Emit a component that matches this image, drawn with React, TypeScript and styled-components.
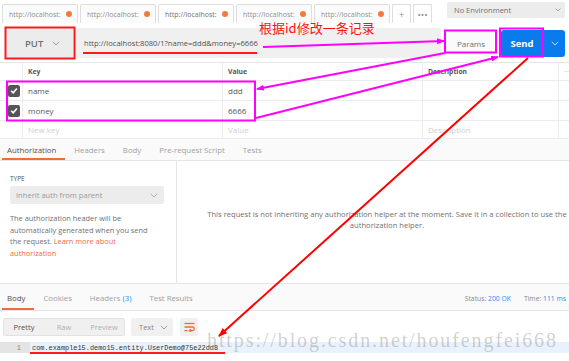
import styled, { createGlobalStyle } from "styled-components";

const GlobalStyle = createGlobalStyle`
  html, body { margin: 0; padding: 0; background: #fff; }
  body { font-family: "Open Sans", "Liberation Sans", sans-serif; overflow: hidden; }
  * { box-sizing: border-box; }
`;

const Page = styled.div`
  position: relative;
  width: 569px;
  height: 361px;
  overflow: hidden;
  background: #fff;
  color: #505050;
`;

/* ---------- top tabs ---------- */
const TabBar = styled.div`
  display: flex;
  align-items: flex-end;
  height: 23px;
  padding: 0 4px 0 2px;
  gap: 2px;
`;
const Tab = styled.div<{ $active?: boolean }>`
  width: 76px;
  height: 19px;
  display: flex;
  align-items: center;
  justify-content: space-between;
  padding: 0 5px 0 6px;
  border: 1px solid #dedede;
  border-bottom: none;
  border-radius: 2px 2px 0 0;
  background: ${p => (p.$active ? "#fff" : "#fbfbfb")};
  font-size: 7px;
  color: ${p => (p.$active ? "#707070" : "#8f8f8f")};
`;
const Dot = styled.span`
  width: 6px;
  height: 6px;
  border-radius: 50%;
  background: #f47a3c;
`;
const TabIcon = styled.div`
  width: 19px;
  height: 19px;
  display: flex;
  align-items: center;
  justify-content: center;
  border: 1px solid #dedede;
  border-bottom: none;
  font-size: 9px;
  color: #8f8f8f;
`;
const EnvSelect = styled.div`
  align-self: flex-start;
  margin: 2px 0 0 auto;
  width: 118px;
  height: 16px;
  display: flex;
  align-items: center;
  justify-content: space-between;
  padding: 0 4px 0 7px;
  background: #ececec;
  border-radius: 2px;
  font-size: 7.5px;
  color: #707070;
`;

/* ---------- request row ---------- */
const RequestRow = styled.div`
  display: flex;
  align-items: center;
  height: 30px;
  margin-top: 5px;
  padding: 0 4px 0 6px;
`;
const MethodSelect = styled.div`
  width: 67px;
  height: 30px;
  display: flex;
  align-items: center;
  gap: 9px;
  padding-left: 19px;
  background: #ececec;
  font-size: 9.5px;
  font-weight: 600;
  color: #707070;
`;
const UrlInput = styled.div`
  flex: 1;
  height: 30px;
  display: flex;
  align-items: center;
  padding-left: 10px;
  margin-left: 1px;
  background: #f0f0f0;
  font-size: 7.6px;
  color: #505050;
`;
const ParamsButton = styled.div`
  width: 50px;
  height: 24px;
  margin: 0 5px 0 5px;
  display: flex;
  align-items: center;
  justify-content: center;
  background: #fafafa;
  font-size: 8px;
  color: #707070;
`;
const SendGroup = styled.div`
  display: flex;
  height: 27px;
  border-radius: 3px;
  overflow: hidden;
  background: #097bed;
`;
const SendButton = styled.div`
  width: 42px;
  display: flex;
  align-items: center;
  justify-content: center;
  color: #fff;
  font-size: 9.5px;
  font-weight: 700;
`;
const SendMore = styled.div`
  width: 22px;
  display: flex;
  align-items: center;
  justify-content: center;
  border-left: 1px solid #0a6ccf;
`;

/* ---------- params table ---------- */
const ParamsTable = styled.div`
  margin-top: 4px;
  border-top: 1px solid #e6e6e6;
`;
const ParamRow = styled.div<{ $h: number; $head?: boolean }>`
  display: grid;
  grid-template-columns: 23px 200px 200px 1fr 10px;
  height: ${p => p.$h}px;
  border-bottom: 1px solid #ececec;
  font-size: ${p => (p.$head ? "6.8px" : "8px")};
  font-weight: ${p => (p.$head ? 700 : 400)};
`;
const Cell = styled.div<{ $muted?: boolean; $last?: boolean }>`
  display: flex;
  align-items: center;
  padding-left: 5px;
  border-right: ${p => (p.$last ? "none" : "1px solid #ececec")};
  color: ${p => (p.$muted ? "#cfcfcf" : "#555")};
`;
const CheckCell = styled.div`
  display: flex;
  align-items: center;
  justify-content: flex-end;
  padding-right: 2px;
  border-right: 1px solid #ececec;
`;
const CheckBox = styled.span`
  width: 12px;
  height: 12px;
  border-radius: 2px;
  background: #555;
  display: flex;
  align-items: center;
  justify-content: center;
`;

/* ---------- auth ---------- */
const SubTabs = styled.div<{ $h: number }>`
  display: flex;
  align-items: center;
  height: ${p => p.$h}px;
  gap: 18px;
  padding: 0 0 0 7px;
  background: #fafafa;
  border-bottom: 1px solid #e6e6e6;
  font-size: 7.8px;
  color: #a0a0a0;
`;
const SubTab = styled.div<{ $active?: boolean }>`
  position: relative;
  height: 100%;
  display: flex;
  align-items: center;
  padding-top: 1px;
  color: ${p => (p.$active ? "#505050" : "#a0a0a0")};
  &::after {
    content: "";
    display: ${p => (p.$active ? "block" : "none")};
    position: absolute;
    left: -5px;
    right: -9px;
    bottom: 0;
    height: 2px;
    background: #f26b3a;
  }
`;
const Count = styled.span`
  color: #2a8cf0;
`;
const AuthBody = styled.div`
  display: flex;
  height: 123px;
  border-bottom: 1px solid #e6e6e6;
`;
const AuthSide = styled.div`
  width: 177px;
  padding: 14px 20px 0 10px;
  border-right: 1px solid #e6e6e6;
`;
const TypeLabel = styled.div`
  font-size: 6.5px;
  color: #505050;
  line-height: 8px;
`;
const TypeSelect = styled.div`
  margin: 3px -8px 0 0;
  height: 18px;
  display: flex;
  align-items: center;
  justify-content: space-between;
  padding: 0 6px 0 6px;
  background: #ececec;
  border-radius: 2px;
  font-size: 7.6px;
  color: #9a9a9a;
`;
const HelpText = styled.p`
  margin: 9px 0 0;
  font-size: 7.4px;
  line-height: 11.7px;
  color: #707070;
`;
const Link = styled.span`
  color: #f26b3a;
`;
const AuthInfo = styled.div`
  flex: 1;
  display: flex;
  align-items: center;
  justify-content: center;
  padding: 0 0 4px 28px;
  text-align: center;
  font-size: 7.6px;
  line-height: 11px;
  color: #707070;
  white-space: nowrap;
`;

/* ---------- response ---------- */
const Status = styled.div`
  margin-left: auto;
  display: flex;
  gap: 13px;
  padding: 2px 0 0 0;
  font-size: 6.8px;
  color: #888;
  margin-right: 3px;
  white-space: nowrap;
`;
const Blue = styled.span`
  color: #2a8cf0;
`;
const Toolbar = styled.div`
  display: flex;
  align-items: center;
  gap: 6px;
  height: 18px;
  margin-top: 7px;
  padding-left: 3px;
`;
const Segmented = styled.div`
  width: 122px;
  height: 18px;
  display: flex;
  background: #f0f0f0;
  border: 1px solid #e2e2e2;
  border-radius: 2px;
  font-size: 7.5px;
`;
const Segment = styled.div<{ $active?: boolean }>`
  flex: 1;
  display: flex;
  align-items: center;
  justify-content: center;
  color: ${p => (p.$active ? "#505050" : "#b0b0b0")};
`;
const ToolSelect = styled.div`
  width: 42px;
  height: 18px;
  display: flex;
  align-items: center;
  gap: 6px;
  padding-left: 8px;
  background: #f0f0f0;
  border-radius: 2px;
  font-size: 7.5px;
  color: #888;
`;
const ToolButton = styled.div`
  width: 18px;
  height: 18px;
  margin-left: 1px;
  display: flex;
  align-items: center;
  justify-content: center;
  background: #f0f0f0;
  border-radius: 2px;
`;
const CodeLine = styled.div`
  display: flex;
  height: 11px;
  margin-top: 6px;
  font-family: "Liberation Mono", "DejaVu Sans Mono", monospace;
  font-size: 6.9px;
`;
const Gutter = styled.div`
  width: 30px;
  padding-right: 9px;
  display: flex;
  align-items: center;
  justify-content: flex-end;
  background: #e4e4e4;
  color: #888;
`;
const CodeText = styled.div`
  flex: 1;
  display: flex;
  align-items: center;
  padding-left: 2px;
  background: #e9f2fc;
  color: #333;
`;

/* ---------- overlays ---------- */
const Note = styled.div`
  position: absolute;
  left: 259px;
  top: 19px;
  font-family: "Noto Sans CJK SC", "Liberation Sans", sans-serif;
  font-size: 13px;
  line-height: 18px;
  color: #ff1010;
`;
const Watermark = styled.div`
  position: absolute;
  left: 207px;
  top: 330px;
  font-family: "Liberation Serif", serif;
  font-size: 20px;
  line-height: 20px;
  letter-spacing: 1.9px;
  color: rgba(110, 110, 110, 0.33);
  white-space: nowrap;
`;
const Overlay = styled.svg`
  position: absolute;
  left: 0;
  top: 0;
  pointer-events: none;
`;

const Chevron = ({ color = "#999", w = 8 }: { color?: string; w?: number }) => (
  <svg width={w} height={w * 0.6} viewBox="0 0 10 6" fill="none">
    <path d="M1 1l4 4 4-4" stroke={color} strokeWidth="1.2" />
  </svg>
);

const Check = () => (
  <svg width="8" height="7" viewBox="0 0 7 6" fill="none">
    <path d="M1 3.2l1.8 1.8L6 1.2" stroke="#fff" strokeWidth="1.4" />
  </svg>
);

const WrapIcon = () => (
  <svg width="11" height="10" viewBox="0 0 11 10" fill="none" stroke="#f26b3a" strokeWidth="1.3">
    <path d="M0.5 1.5h10" />
    <path d="M0.5 5h8a1.8 1.8 0 0 1 0 3.6H5.5" />
    <path d="M7 7.2L5.4 8.6 7 10" />
    <path d="M0.5 8.6h3" />
  </svg>
);

const tabs = [false, false, true, false, false];

const params = [
  { key: "name", value: "ddd" },
  { key: "money", value: "6666" },
];

export default function App() {
  return (
    <Page>
      <GlobalStyle />
      <TabBar>
        {tabs.map((active, i) => (
          <Tab key={i} $active={active}>
            http://localhost:
            <Dot />
          </Tab>
        ))}
        <TabIcon>+</TabIcon>
        <TabIcon>•••</TabIcon>
        <EnvSelect>
          No Environment
          <Chevron w={6} color="#888" />
        </EnvSelect>
      </TabBar>

      <RequestRow>
        <MethodSelect>
          PUT
          <Chevron />
        </MethodSelect>
        <UrlInput>http://localhost:8080/1?name=ddd&amp;money=6666</UrlInput>
        <ParamsButton>Params</ParamsButton>
        <SendGroup>
          <SendButton>Send</SendButton>
          <SendMore>
            <Chevron color="#cfe4fb" />
          </SendMore>
        </SendGroup>
      </RequestRow>

      <ParamsTable>
        <ParamRow $h={18} $head>
          <CheckCell />
          <Cell>Key</Cell>
          <Cell>Value</Cell>
          <Cell>Description</Cell>
          <Cell $last $muted>
            ···
          </Cell>
        </ParamRow>
        {params.map(p => (
          <ParamRow key={p.key} $h={20}>
            <CheckCell>
              <CheckBox>
                <Check />
              </CheckBox>
            </CheckCell>
            <Cell>{p.key}</Cell>
            <Cell>{p.value}</Cell>
            <Cell />
            <Cell $last />
          </ParamRow>
        ))}
        <ParamRow $h={18}>
          <CheckCell />
          <Cell $muted>New key</Cell>
          <Cell $muted>Value</Cell>
          <Cell $muted>Description</Cell>
          <Cell $last />
        </ParamRow>
      </ParamsTable>

      <SubTabs $h={22}>
        <SubTab $active>Authorization</SubTab>
        <SubTab>Headers</SubTab>
        <SubTab>Body</SubTab>
        <SubTab>Pre-request Script</SubTab>
        <SubTab>Tests</SubTab>
      </SubTabs>

      <AuthBody>
        <AuthSide>
          <TypeLabel>TYPE</TypeLabel>
          <TypeSelect>
            Inherit auth from parent
            <Chevron w={8} color="#aaa" />
          </TypeSelect>
          <HelpText>
            The authorization header will be automatically generated when you send the request.{" "}
            <Link>Learn more about authorization</Link>
          </HelpText>
        </AuthSide>
        <AuthInfo>
          This request is not inheriting any authorization helper at the moment. Save it in a collection to use the
          <br />
          authorization helper.
        </AuthInfo>
      </AuthBody>

      <SubTabs $h={27}>
        <SubTab $active>Body</SubTab>
        <SubTab>Cookies</SubTab>
        <SubTab>
          Headers&nbsp;<Count>(3)</Count>
        </SubTab>
        <SubTab>Test Results</SubTab>
        <Status>
          <span>
            Status: <Blue>200 OK</Blue>
          </span>
          <span>
            Time: <Blue>111 ms</Blue>
          </span>
        </Status>
      </SubTabs>

      <Toolbar>
        <Segmented>
          <Segment $active>Pretty</Segment>
          <Segment>Raw</Segment>
          <Segment>Preview</Segment>
        </Segmented>
        <ToolSelect>
          Text
          <Chevron w={8} color="#999" />
        </ToolSelect>
        <ToolButton>
          <WrapIcon />
        </ToolButton>
      </Toolbar>

      <CodeLine>
        <Gutter>1</Gutter>
        <CodeText>com.example15.demo15.entity.UserDemo@75e22dd8</CodeText>
      </CodeLine>

      <Watermark>https://blog.csdn.net/houfengfei668</Watermark>
      <Note>根据id修改一条记录</Note>

      <Overlay width="569" height="361" viewBox="0 0 569 361">
        <defs>
          <marker id="mag" markerWidth="8" markerHeight="6" refX="7" refY="3" orient="auto" markerUnits="userSpaceOnUse">
            <path d="M0 0L8 3L0 6z" fill="#ff00ff" />
          </marker>
          <marker id="red" markerWidth="9" markerHeight="7" refX="8" refY="3.5" orient="auto" markerUnits="userSpaceOnUse">
            <path d="M0 0L9 3.5L0 7z" fill="#ff0000" />
          </marker>
        </defs>
        <g fill="none" strokeWidth="2">
          <rect x="5.5" y="27.5" width="69" height="31" stroke="#ff1a1a" />
          <rect x="445" y="30.5" width="51" height="22" stroke="#ff00ff" />
          <rect x="500" y="28.5" width="43" height="28" stroke="#ff00ff" />
          <rect x="7" y="81.5" width="248" height="39" stroke="#ff00ff" />
          <line x1="83" y1="53" x2="257" y2="53" stroke="#ff1a1a" />
          <line x1="30" y1="353" x2="225" y2="353" stroke="#ff1a1a" />
          <line x1="263" y1="47" x2="444" y2="41" stroke="#ff00ff" markerEnd="url(#mag)" />
          <line x1="445" y1="53" x2="257" y2="89" stroke="#ff00ff" markerEnd="url(#mag)" />
          <line x1="256" y1="118" x2="498" y2="57" stroke="#ff00ff" markerEnd="url(#mag)" />
          <line x1="528" y1="58" x2="219" y2="336" stroke="#ff0000" markerEnd="url(#red)" />
        </g>
      </Overlay>
    </Page>
  );
}
